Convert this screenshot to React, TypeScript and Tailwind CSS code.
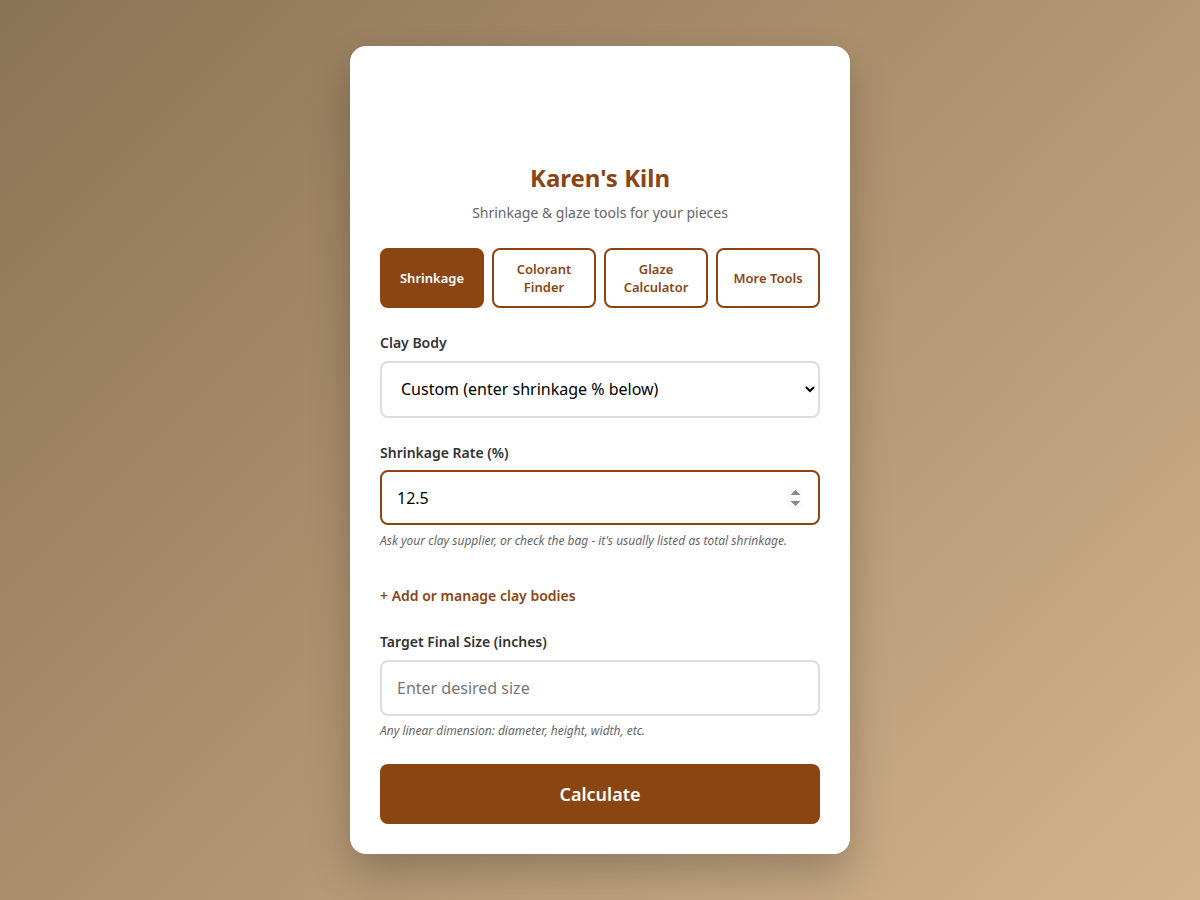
import * as React from "react";

const tabs = [
  { id: "shrinkage", label: "Shrinkage" },
  { id: "colorant", label: "Colorant Finder" },
  { id: "glaze", label: "Glaze Calculator" },
  { id: "more", label: "More Tools" },
];

export default function App() {
  const [active, setActive] = React.useState("shrinkage");
  const [clay, setClay] = React.useState("custom");
  const [rate, setRate] = React.useState("12.5");
  const [target, setTarget] = React.useState("");

  return (
    <div
      className="min-h-screen flex items-center justify-center bg-[linear-gradient(135deg,#8b7355_0%,#d2b48c_100%)]"
      style={{ fontFamily: '"Noto Sans", "Open Sans", sans-serif' }}
    >
      <div className="w-[500px] bg-white rounded-[16px] p-[30px] shadow-[0_20px_40px_rgba(0,0,0,0.22)]">
        {/* logo slot (empty) */}
        <div className="h-[87px]" />

        <h1 className="text-center text-[24px] leading-[29px] font-bold text-[#8b4513]">Karen's Kiln</h1>
        <p className="mt-[11px] text-center text-[14px] leading-[20px] text-[#666]">
          Shrinkage &amp; glaze tools for your pieces
        </p>

        <div className="mt-[25px] flex gap-2">
          {tabs.map((t) => (
            <button
              key={t.id}
              onClick={() => setActive(t.id)}
              className={
                "flex-1 h-[60px] px-[10px] rounded-[8px] border-2 border-[#8b4513] text-[13px] leading-[18px] font-semibold " +
                (active === t.id ? "bg-[#8b4513] text-white" : "bg-white text-[#8b4513]")
              }
            >
              {t.label}
            </button>
          ))}
        </div>

        <div className="mt-[25px]">
          <label className="block text-[14px] leading-[20px] font-semibold text-[#333] mb-[8px]">Clay Body</label>
          <select
            value={clay}
            onChange={(e) => setClay(e.target.value)}
            className="w-full h-[57px] pl-[15px] pr-[15px] pb-[2px] border-2 border-[#ddd] rounded-[8px] text-[16px] text-black bg-white"
            style={{ fontFamily: '"Noto Sans", sans-serif' }}
          >
            <option value="custom">Custom (enter shrinkage % below)</option>
          </select>
        </div>

        <div className="mt-[25px]">
          <label className="block text-[14px] leading-[20px] font-semibold text-[#333] mb-[7px]">Shrinkage Rate (%)</label>
          <input
            type="number"
            autoFocus
            value={rate}
            onChange={(e) => setRate(e.target.value)}
            className="w-full h-[55px] px-[15px] border-2 border-[#8b4513] rounded-[8px] text-[16px] text-black outline-none caret-transparent"
          />
          <p className="mt-[7px] text-[12px] leading-[17px] italic text-[#666]">
            Ask your clay supplier, or check the bag - it's usually listed as total shrinkage.
          </p>
        </div>

        <button className="mt-[37px] block text-[14px] leading-[20px] font-semibold text-[#8b4513]">
          + Add or manage clay bodies
        </button>

        <div className="mt-[26px]">
          <label className="block text-[14px] leading-[20px] font-semibold text-[#333] mb-[8px]">
            Target Final Size (inches)
          </label>
          <input
            type="number"
            value={target}
            onChange={(e) => setTarget(e.target.value)}
            placeholder="Enter desired size"
            className="w-full h-[56px] px-[15px] border-2 border-[#ddd] rounded-[8px] text-[16px] text-black placeholder:text-[#777] outline-none"
          />
          <p className="mt-[6px] text-[12px] leading-[17px] italic text-[#666]">
            Any linear dimension: diameter, height, width, etc.
          </p>
        </div>

        <button className="mt-[25px] w-full h-[60px] rounded-[8px] bg-[#8b4513] text-white text-[18px] font-semibold">
          Calculate
        </button>
      </div>
    </div>
  );
}
